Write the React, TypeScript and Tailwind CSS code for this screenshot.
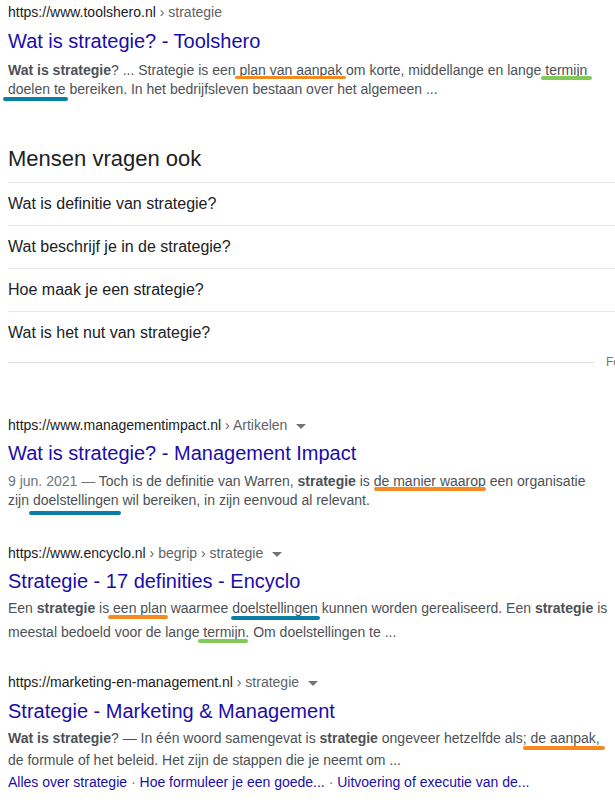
import React from "react";

const Caret = () => (
  <svg width="10" height="5" viewBox="0 0 10 5" className="ml-[9px] inline-block align-middle">
    <path d="M0 0h10L5 5z" fill="#70757a" />
  </svg>
);

// hand drawn highlight under a phrase
const Mark = ({ children, bar }: { children: React.ReactNode; bar: string }) => (
  <span className="relative whitespace-nowrap">
    {children}
    <span className={bar} />
  </span>
);

const Url = ({ host, crumbs, caret }: { host: string; crumbs: string; caret?: boolean }) => (
  <div className="h-[20px] text-sm leading-[20px] whitespace-nowrap">
    <span className="text-[#202124]">{host}</span>
    <span className="text-[#5f6368]"> › {crumbs}</span>
    {caret && <Caret />}
  </div>
);

const Title = ({ children, className }: { children: React.ReactNode; className: string }) => (
  <div className={`text-[20px] leading-[26px] text-[#1a0dab] whitespace-nowrap ${className}`}>{children}</div>
);

const questions = [
  "Wat is definitie van strategie?",
  "Wat beschrijf je in de strategie?",
  "Hoe maak je een strategie?",
  "Wat is het nut van strategie?",
];

const App = () => {
  return (
    <div className="w-[615px] min-h-[804px] overflow-hidden bg-white pl-2 font-['Liberation_Sans',Arial,sans-serif]">
      {/* toolshero */}
      <div className="pt-[2px]">
        <Url host="https://www.toolshero.nl" crumbs="strategie" />
        <Title className="mt-[6px]">Wat is strategie? - Toolshero</Title>
        <div className="mt-[7px] text-sm leading-[19px] text-[#4d5156] whitespace-nowrap">
          <div>
            <b className="font-bold">Wat is strategie</b>? ... Strategie is een{" "}
            <Mark bar="absolute left-[-4px] right-[-4px] top-[14px] h-[3px] rounded-full bg-[#f7891f]">plan van aanpak</Mark> om korte,
            middellange en lange{" "}
            <Mark bar="absolute left-[-4px] right-[-5px] top-[14px] h-[4px] rounded-full bg-[#82c95a]">termijn</Mark>
          </div>
          <div>
            <Mark bar="absolute left-[-5px] right-[-2px] top-[16px] h-[4px] rounded-full bg-[#0a7fa5]">doelen te</Mark> bereiken. In het
            bedrijfsleven bestaan over het algemeen ...
          </div>
        </div>
      </div>

      {/* people also ask */}
      <div className="mt-[46px] text-[22px] leading-[28px] text-[#202124]">Mensen vragen ook</div>
      <div className="mt-[9px]">
        {questions.map((q) => (
          <div key={q} className="flex h-[43px] items-center border-t border-[#e8eaed] text-base text-[#202124]">
            {q}
          </div>
        ))}
        <div className="flex h-[16px] items-center">
          <div className="h-px w-[586px] shrink-0 bg-[#dadce0]" />
          <span className="ml-3 shrink-0 text-xs text-[#70757a]">Feedback</span>
        </div>
      </div>

      {/* managementimpact */}
      <div className="mt-[45px]">
        <Url host="https://www.managementimpact.nl" crumbs="Artikelen" caret />
        <Title className="mt-[5px]">Wat is strategie? - Management Impact</Title>
        <div className="mt-[6px] text-sm leading-[19px] text-[#4d5156] whitespace-nowrap">
          <div>
            <span className="text-[#70757a]">9 jun. 2021 — </span>Toch is de definitie van Warren,{" "}
            <b className="font-bold">strategie</b> is{" "}
            <Mark bar="absolute left-0 right-0 top-[14px] h-[4px] rounded-full bg-[#f7891f]">de manier waarop</Mark> een organisatie
          </div>
          <div>
            zijn <Mark bar="absolute left-[-4px] right-[-2px] top-[19px] h-[4px] rounded-full bg-[#0a7fa5]">doelstellingen</Mark> wil
            bereiken, in zijn eenvoud al relevant.
          </div>
        </div>
      </div>

      {/* encyclo */}
      <div className="mt-[33px]">
        <Url host="https://www.encyclo.nl" crumbs="begrip › strategie" caret />
        <Title className="mt-[5px]">Strategie - 17 definities - Encyclo</Title>
        <div className="mt-[2px] text-sm leading-[24px] text-[#4d5156] whitespace-nowrap">
          <div>
            Een <b className="font-bold">strategie</b> is{" "}
            <Mark bar="absolute left-[-5px] right-[-1px] top-[15px] h-[4px] rounded-full bg-[#f7891f]">een plan</Mark> waarmee{" "}
            <Mark bar="absolute left-[-1px] right-[-2px] top-[16px] h-[4px] rounded-full bg-[#0a7fa5]">doelstellingen</Mark> kunnen
            worden gerealiseerd. Een <b className="font-bold">strategie</b> is
          </div>
          <div>
            meestal bedoeld voor de lange{" "}
            <Mark bar="absolute left-[-5px] right-[1px] top-[15px] h-[4px] rounded-full bg-[#82c95a]">termijn.</Mark> Om doelstellingen
            te ...
          </div>
        </div>
      </div>

      {/* marketing-en-management */}
      <div className="mt-[28px]">
        <Url host="https://marketing-en-management.nl" crumbs="strategie" caret />
        <Title className="mt-[6px]">Strategie - Marketing &amp; Management</Title>
        <div className="mt-[3px] text-sm leading-[22px] text-[#4d5156] whitespace-nowrap">
          <div>
            <b className="font-bold">Wat is strategie</b>? — In één woord samengevat is <b className="font-bold">strategie</b>{" "}
            ongeveer hetzelfde als;{" "}
            <Mark bar="absolute left-[-7px] right-[-5px] top-[16px] h-[4px] rounded-full bg-[#f7891f]">de aanpak,</Mark>
          </div>
          <div>de formule of het beleid. Het zijn de stappen die je neemt om ...</div>
        </div>
        <div className="mt-[1px] text-sm leading-[20px] whitespace-nowrap">
          <span className="text-[#1a0dab]">Alles over strategie</span>
          <span className="text-[#70757a]"> · </span>
          <span className="text-[#1a0dab]">Hoe formuleer je een goede...</span>
          <span className="text-[#70757a]"> · </span>
          <span className="text-[#1a0dab]">Uitvoering of executie van de...</span>
        </div>
      </div>
    </div>
  );
};

export default App;
